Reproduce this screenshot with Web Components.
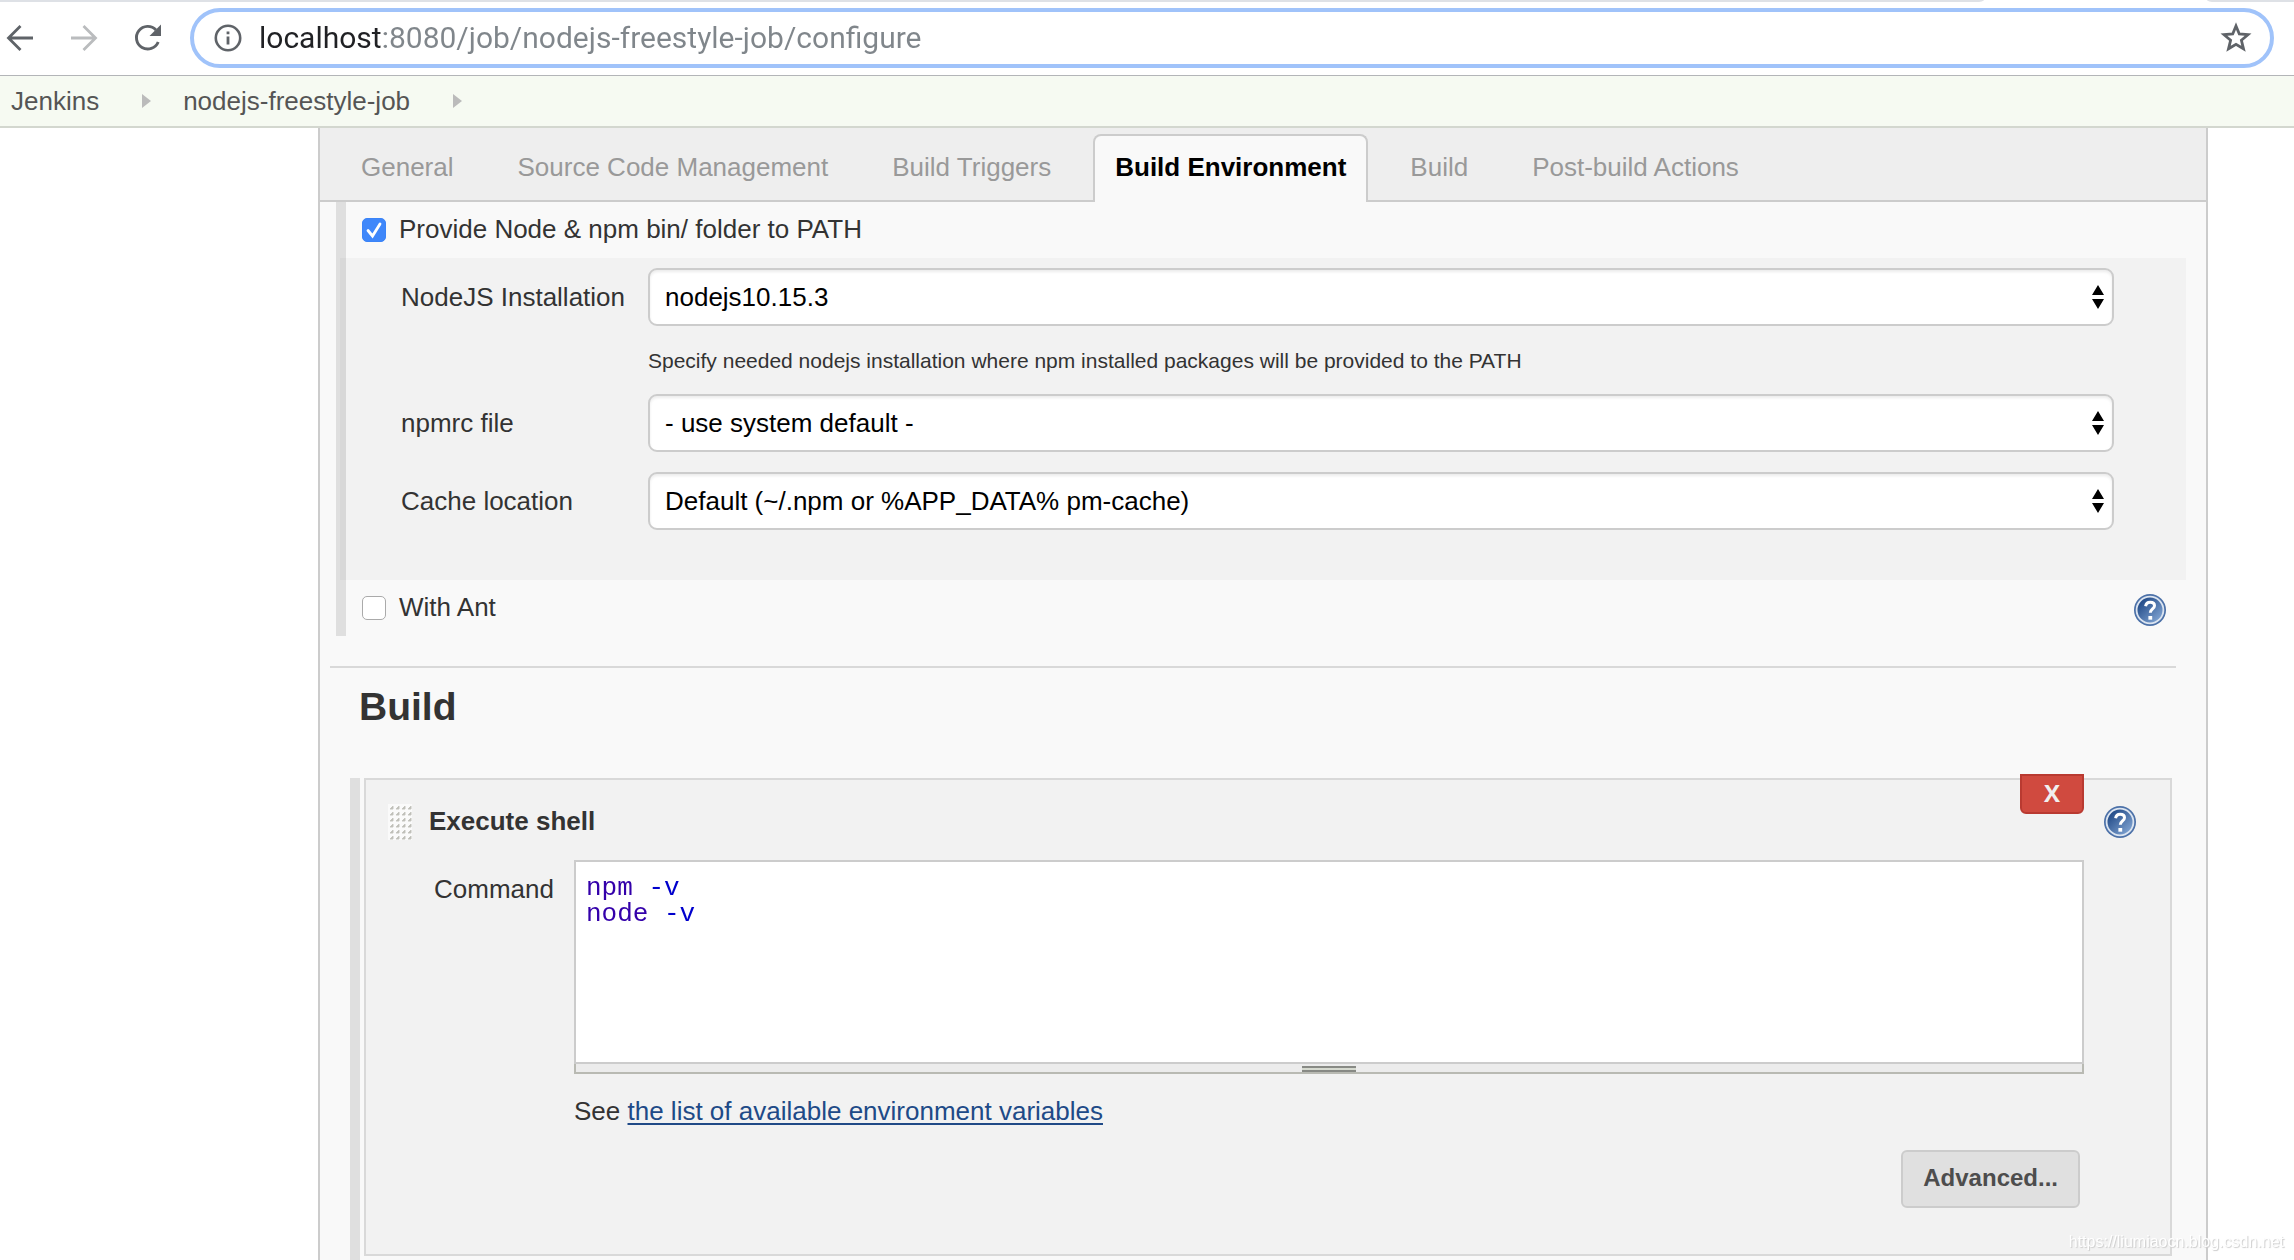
<!DOCTYPE html>
<html lang="en">
<head>
<meta charset="utf-8">
<title>nodejs-freestyle-job Config [Jenkins]</title>
<style>
  html, body { height: 100%; margin: 0; }
  body {
    display: flex; flex-direction: column; overflow: hidden; background: #fff; color: #333;
    font: 26px/32px "Liberation Sans", Helvetica, Arial, sans-serif;
  }
</style>
</head>
<body>
<browser-toolbar url="localhost:8080/job/nodejs-freestyle-job/configure"></browser-toolbar>
<bread-crumbs items="Jenkins|nodejs-freestyle-job"></bread-crumbs>
<config-panel>
  <config-tabs slot="tabs" items="General|Source Code Management|Build Triggers|Build Environment|Build|Post-build Actions" active="Build Environment"></config-tabs>
  <option-group>
    <check-option label="Provide Node &amp; npm bin/ folder to PATH" checked></check-option>
    <nested-options>
      <select-field label="NodeJS Installation" value="nodejs10.15.3" hint="Specify needed nodejs installation where npm installed packages will be provided to the PATH"></select-field>
      <select-field label="npmrc file" value="- use system default -"></select-field>
      <select-field label="Cache location" value="Default (~/.npm or %APP_DATA% pm-cache)"></select-field>
    </nested-options>
    <check-option label="With Ant"><help-button></help-button></check-option>
  </option-group>
  <section-title>Build</section-title>
  <build-step name="Execute shell">
    <code-editor label="Command"></code-editor>
    <span slot="note">See <a-link to="#env-vars">the list of available environment variables</a-link></span>
    <plain-button slot="actions">Advanced...</plain-button>
  </build-step>
</config-panel>
<water-mark>https://liumiaocn.blog.csdn.net</water-mark>

<script>
const esc = s => s.replace(/&/g, "&amp;").replace(/</g, "&lt;").replace(/"/g, "&quot;");

class Base extends HTMLElement {
  connectedCallback() {
    if (this.shadowRoot) return;
    this.attachShadow({ mode: "open" }).innerHTML =
      `<style>*{box-sizing:border-box} :host{box-sizing:border-box} button,input,select,textarea{font:inherit;margin:0} ${this.css()}</style>${this.html()}`;
  }
  attr(n) { return esc(this.getAttribute(n) || ""); }
  list(n) { return (this.getAttribute(n) || "").split("|").map(esc); }
}

customElements.define("browser-toolbar", class extends Base {
  css() { return `
    :host{display:block;flex:none;background:#fff;border-bottom:1px solid #b3b5b8}
    .strip{display:flex;height:2px;background:#fff}
    .strip i{background:#dee1e6}
    .strip i:first-child{flex:1;border-bottom-right-radius:8px 2px}
    .strip i:last-child{width:87px;margin-left:223px;border-bottom-left-radius:8px 2px}
    .bar{display:flex;align-items:center;padding:6px 20px 7px 0}
    .nav{display:flex;gap:24px;margin-right:22px}
    button{border:0;background:none;padding:0;width:40px;height:40px;display:grid;place-items:center}
    svg{display:block}
    .box{flex:1;display:flex;align-items:center;height:60px;border:4px solid #a0c3fa;border-radius:30px;padding:0 14px 0 19px}
    input{flex:1;min-width:0;border:0;padding:0;margin-left:16px;height:40px;outline:0;
      font:30px/40px Roboto,sans-serif;color:#202124;-webkit-text-fill-color:transparent;
      background:linear-gradient(90deg,#202124 125px,#80868b 125px);-webkit-background-clip:text;background-clip:text}`; }
  html() { return `
    <div class="strip"><i></i><i></i></div>
    <div class="bar">
      <div class="nav">
        <button aria-label="Back"><svg width="30" height="30" fill="none" stroke="#5f6368" stroke-width="2.8"><path d="M28 15H4M15.500 3 3.500 15l12 12"/></svg></button>
        <button aria-label="Forward"><svg width="30" height="30" fill="none" stroke="#babcbe" stroke-width="2.8"><path d="M2 15h24M14.500 3l12 12-12 12"/></svg></button>
        <button aria-label="Reload"><svg width="32" height="32"><path d="M26.200 20A11.300 11.300 0 1 1 24 8" fill="none" stroke="#5f6368" stroke-width="2.900"/><path d="M29 2.500V14H17.500z" fill="#5f6368"/></svg></button>
      </div>
      <div class="box">
        <svg width="30" height="30"><circle cx="15" cy="15" r="12.200" fill="none" stroke="#5f6368" stroke-width="2.600"/><path d="M13.600 8.500h2.800v2.800h-2.800zM13.600 13.500h2.800v8h-2.800z" fill="#5f6368"/></svg>
        <input aria-label="Address" value="${this.attr("url")}" spellcheck="false">
        <button aria-label="Bookmark this page"><svg width="32" height="32"><path d="M16 4l3.300 8 8.700.7-6.600 5.600 2.100 8.500L16 22.300l-7.500 4.500 2.100-8.500L4 12.700l8.700-.7z" fill="none" stroke="#5f6368" stroke-width="2.800"/></svg></button>
      </div>
    </div>`; }
});

customElements.define("bread-crumbs", class extends Base {
  css() { return `
    :host{display:block;flex:none;background:#f6faf2;border-bottom:2px solid #d3d7cf}
    nav{display:flex;align-items:center;height:50px;padding-left:11px}
    a{color:#555;text-decoration:none}
    svg{margin:0 32px 0 43px}`; }
  html() { return `<nav aria-label="Breadcrumbs">${this.list("items").map(t =>
    `<a href="#">${t}</a><svg width="9" height="14"><path d="M0 0l9 7-9 7z" fill="#bbb"/></svg>`).join("")}</nav>`; }
});

customElements.define("config-panel", class extends Base {
  css() { return `
    :host{display:block;flex:1 0 auto;margin:0 86px 0 318px;background:#f9f9f9;border:solid #ccc;border-width:0 2px}`; }
  html() { return `<slot name="tabs"></slot><slot></slot>`; }
});

customElements.define("config-tabs", class extends Base {
  css() { return `
    :host{display:flex;align-items:flex-end;height:74px;padding:0 9px;background:#eee;box-shadow:inset 0 -2px #ccc}
    button{height:68px;margin:0 10px;padding:0 20px 4px;border:2px solid transparent;border-bottom:0;background:none;color:#999;white-space:nowrap}
    .on{background:#f9f9f9;border-color:#ccc;border-radius:8px 8px 0 0;color:#000;font-weight:bold}`; }
  html() { return this.list("items").map(t => `<button class="${t === this.attr("active") ? "on" : ""}">${t}</button>`).join(""); }
});

customElements.define("option-group", class extends Base {
  css() { return `:host{display:block;margin:0 20px 30px 16px;border-left:10px solid #dfdfdf}`; }
  html() { return `<slot></slot>`; }
});

customElements.define("check-option", class extends Base {
  css() { return `
    :host{display:flex;align-items:center;justify-content:space-between;height:56px;padding:0 20px 0 16px}
    label{display:flex;align-items:center;gap:13px}
    .text{padding-bottom:2px}
    ::slotted(*){padding-top:4px}
    .tick{display:grid}
    .tick>*{grid-area:1/1}
    input{appearance:none;width:24px;height:24px;border:1px solid #aaa;border-radius:5px;background:#fff}
    input:checked{border-color:#3b84f8;background:#3f87fa}
    svg{pointer-events:none;visibility:hidden}
    input:checked+svg{visibility:visible}`; }
  html() { return `<label><span class="tick"><input type="checkbox" ${this.hasAttribute("checked") ? "checked" : ""}>
    <svg width="24" height="24"><path d="M6 12.500l4.500 5.500L18 6" fill="none" stroke="#fff" stroke-width="2.800" stroke-linecap="round"/></svg></span><span class="text">${this.attr("label")}</span></label><slot></slot>`; }
});

customElements.define("nested-options", class extends Base {
  css() { return `:host{display:flex;flex-direction:column;gap:20px;margin-left:-6px;padding:10px 72px 50px 61px;background:rgba(0,0,0,.027)}`; }
  html() { return `<slot></slot>`; }
});

customElements.define("select-field", class extends Base {
  css() { return `
    :host{display:grid;grid-template-columns:247px 1fr;align-items:center}
    .pick{display:grid;align-items:center}
    .pick>*{grid-area:1/1}
    select{appearance:none;width:100%;height:58px;padding:0 40px 0 15px;border:2px solid #ccc;border-radius:9px;background:#fff;color:#000;box-shadow:inset 0 2px 3px rgba(0,0,0,.08)}
    svg{justify-self:end;margin-right:10px;pointer-events:none}
    p{grid-column:2;margin:19px 0 -3px;line-height:32px;font-size:21px}`; }
  html() { const h = this.attr("hint"); return `<label for="s">${this.attr("label")}</label>
    <div class="pick"><select id="s"><option>${this.attr("value")}</option></select>
    <svg width="12" height="24"><path d="M6 0l6 10H0zM6 24l6-10H0z"/></svg></div>${h ? `<p>${h}</p>` : ""}`; }
});

customElements.define("help-button", class extends Base {
  css() { return `:host{display:block}button{display:block;width:32px;height:32px;padding:0;border:0;background:none}svg{display:block}`; }
  html() { return `<button aria-label="Help"><svg width="32" height="32">
    <defs><linearGradient id="g" x1="0" y1="0" x2="1" y2="1"><stop offset=".2" stop-color="#28508c"/><stop offset="1" stop-color="#8fb2de"/></linearGradient></defs>
    <circle cx="16" cy="16" r="16" fill="#4c71a8"/><circle cx="16" cy="16" r="13.400" fill="url(#g)" stroke="#dbe4f0" stroke-width="1.800"/>
    <path d="M11.600 12.200c.4-2.600 2-3.900 4.600-3.900 2.700 0 4.300 1.400 4.300 3.500 0 3.100-4.200 3.300-4.200 7" fill="none" stroke="#fff" stroke-width="3"/><path d="M14.400 22h3.800v3.700h-3.800z" fill="#fff"/></svg></button>`; }
});

customElements.define("section-title", class extends Base {
  css() { return `:host{display:block;margin:0 30px 0 10px;padding:15px 0 47px 29px;border-top:2px solid #d9d9d9}
    h2{margin:0;font-size:39px;line-height:48px}`; }
  html() { return `<h2><slot></slot></h2>`; }
});

customElements.define("build-step", class extends Base {
  css() { return `
    :host{display:block;margin:0 34px 0 30px;padding:0 0 20px 4px;border-left:10px solid #dfdfdf}
    section{position:relative;border:2px solid #d9d9d9;background:#f2f2f2;padding:0 86px 46px 22px}
    header{display:flex;align-items:center;gap:17px;height:80px;padding-top:4px;margin-right:-52px}
    h3{flex:1;margin:0;padding-bottom:2px;font-size:26px}
    .x{position:absolute;top:-6px;right:86px;width:64px;height:40px;padding:0 0 2px;border:2px solid #b93a31;border-radius:0 0 6px 6px;background:#d04a3f;color:#f0f0f0;font:bold 24px/32px "Open Sans",sans-serif}
    .note{padding:21px 0 23px 186px}
    .act{display:flex;justify-content:flex-end;padding-right:4px}`; }
  html() {
    let d = "";
    for (let r = 0; r < 6; r++) for (let c = 0; c < 4; c++) d += `M${c * 6 + 5} ${r * 6 + 2}v3h-3z`;
    return `<section>
      <header><svg width="24" height="36"><path d="M0 0h24v36H0z" fill="#fafafa"/><path d="${d}" fill="#b5b5ae" stroke="#c6c6c0"/></svg>
        <h3>${this.attr("name")}</h3><help-button></help-button></header>
      <button class="x">X</button>
      <slot></slot>
      <div class="note"><slot name="note"></slot></div>
      <div class="act"><slot name="actions"></slot></div>
    </section>`; }
});

customElements.define("code-editor", class extends Base {
  css() { return `
    :host{display:flex;padding-left:46px}
    label{flex:none;width:140px;padding-top:13px}
    .ed{flex:1;min-width:0}
    .pane{border:2px solid #ccc;background:#fff;padding:13px 10px 12px}
    textarea{display:block;width:100%;height:175px;padding:0;border:0;outline:0;resize:none;overflow:hidden;
      font:26px/26px "Liberation Mono",monospace;color:#30a;-webkit-text-fill-color:transparent;
      background:linear-gradient(90deg,#30a 55px,#00c 55px) 0 0/100% 26px no-repeat,
        linear-gradient(90deg,#30a 71px,#00c 71px) 0 26px/100% 100% no-repeat;
      -webkit-background-clip:text;background-clip:text}
    .grip{height:10px;border:solid #b9bab3;border-width:0 2px 2px;background:#ececec;display:flex;justify-content:center;align-items:flex-end}
    .grip i{width:54px;height:6px;background:#d6dad0;border:solid #888a85;border-width:2px 0}`; }
  html() { return `<label for="t">${this.attr("label")}</label><div class="ed"><div class="pane"><textarea id="t" spellcheck="false">npm -v
node -v</textarea></div><div class="grip"><i></i></div></div>`; }
});

customElements.define("a-link", class extends Base {
  css() { return `:host{display:inline}a{color:#204a87;text-decoration:underline;text-decoration-thickness:2px;text-underline-offset:3px;text-decoration-skip-ink:none}`; }
  html() { return `<a href="${this.attr("to")}"><slot></slot></a>`; }
});

customElements.define("plain-button", class extends Base {
  css() { return `:host{display:block}button{display:block;height:58px;padding:0 20px 2px;border:2px solid #ccc;border-radius:6px;background:#e0e0e0;color:#4d4d4d;font-weight:bold;font-size:24px}`; }
  html() { return `<button><slot></slot></button>`; }
});

customElements.define("water-mark", class extends Base {
  css() { return `:host{position:fixed;right:10px;bottom:7px;font-size:16px;line-height:22px;color:#fff;text-shadow:1px 1px 1px #ccc;pointer-events:none}`; }
  html() { return `<slot></slot>`; }
});
</script>
</body>
</html>
